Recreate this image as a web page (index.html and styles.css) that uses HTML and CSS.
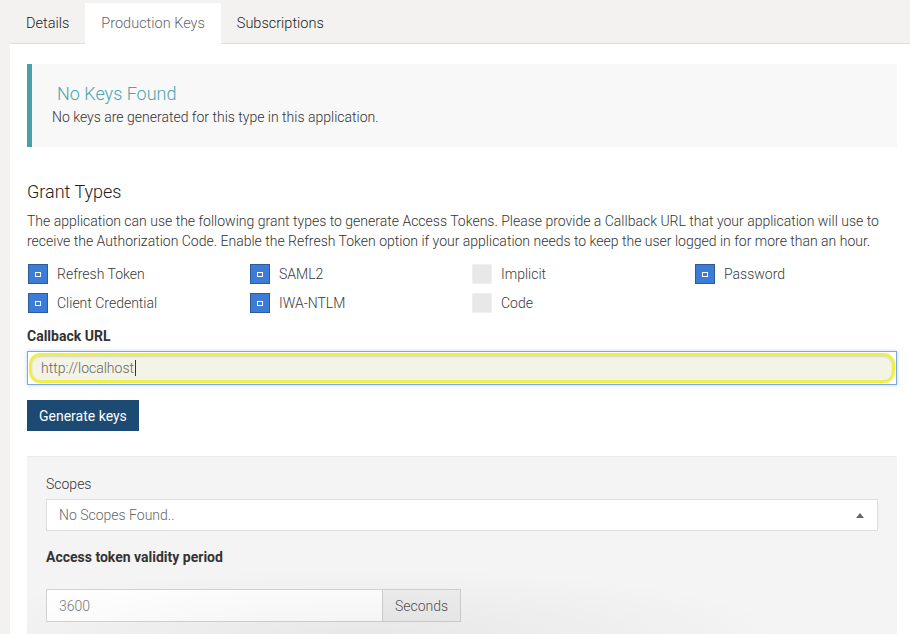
FILE: index.html
```html
<!DOCTYPE html>
<html>
<head>
<meta charset="utf-8">
<link rel="stylesheet" href="styles.css">
</head>
<body>
<div class="page">
  <div class="tabs">
    <div class="tab">Details</div>
    <div class="tab active">Production Keys</div>
    <div class="tab">Subscriptions</div>
  </div>
  <div class="content">
    <div class="alert">
      <div class="alert-title">No Keys Found</div>
      <div class="alert-text">No keys are generated for this type in this application.</div>
    </div>

    <h2 class="heading">Grant Types</h2>
    <p class="desc">The application can use the following grant types to generate Access Tokens. Please provide a Callback URL that your application will use to receive the Authorization Code. Enable the Refresh Token option if your application needs to keep the user logged in for more than an hour.</p>

    <div class="grants">
      <div class="grant"><span class="cb on"></span><span class="lbl">Refresh Token</span></div>
      <div class="grant"><span class="cb on"></span><span class="lbl">SAML2</span></div>
      <div class="grant"><span class="cb"></span><span class="lbl">Implicit</span></div>
      <div class="grant"><span class="cb on"></span><span class="lbl">Password</span></div>
      <div class="grant"><span class="cb on"></span><span class="lbl">Client Credential</span></div>
      <div class="grant"><span class="cb on"></span><span class="lbl">IWA-NTLM</span></div>
      <div class="grant"><span class="cb"></span><span class="lbl">Code</span></div>
    </div>

    <div class="field-label">Callback URL</div>
    <div class="url-outer">
      <div class="url-inner">http://localhost<span class="caret"></span></div>
    </div>

    <button class="btn">Generate keys</button>

    <div class="panel">
      <div class="panel-label">Scopes</div>
      <div class="select">
        <span>No Scopes Found..</span>
        <span class="tri"></span>
      </div>
      <div class="field-label panel-bold">Access token validity period</div>
      <div class="group">
        <div class="group-input">3600</div>
        <div class="group-addon">Seconds</div>
      </div>
    </div>
  </div>
</div>
</body>
</html>
```

FILE: styles.css
```css
html, body {
  margin: 0;
  padding: 0;
}
body {
  background: #f3f2f0;
  font-family: Roboto, "Liberation Sans", Arial, sans-serif;
  font-size: 14px;
  font-weight: 300;
  color: #333;
  height: 634px;
  overflow: hidden;
}
.page {
  margin-left: 10px;
}
.tabs {
  display: flex;
  height: 44px;
  padding-top: 3px;
  box-sizing: border-box;
  border-bottom: 1px solid #deddd8;
  background: #f3f2f0;
}
.tab {
  padding: 2px 16px 0 16px;
  height: 40px;
  box-sizing: border-box;
  line-height: 38px;
  font-size: 14.5px;
  color: #222;
}
.tab.active {
  background: #fff;
  color: #666;
  height: 41px;
  margin-bottom: -1px;
}
.content {
  background: #fff;
  padding: 20px 13px 0 17px;
  height: 590px;
  box-sizing: border-box;
  overflow: hidden;
}
.alert {
  background: #f8f8f8;
  border-left: 5px solid #4a9ea8;
  padding: 18px 20px 20px 20px;
}
.alert-title {
  font-size: 18px;
  line-height: 24px;
  color: #4ba4ae;
  margin-left: 5px;
  margin-bottom: 1px;
}
.alert-text {
  line-height: 20px;
  color: #333;
}
.heading {
  font-size: 18px;
  font-weight: 300;
  line-height: 24px;
  margin: 33px 0 0 0;
  color: #222;
}
.desc {
  margin: 7px 0 0 0;
  line-height: 20px;
  color: #333;
}
.grants {
  display: grid;
  grid-template-columns: 222px 222px 223px 1fr;
  row-gap: 9px;
  margin-top: 13px;
  padding-left: 1px;
}
.grant {
  display: flex;
  align-items: center;
  height: 20px;
}
.cb {
  width: 20px;
  height: 20px;
  box-sizing: border-box;
  background: #e8e8e8;
  border: 1px solid #efefef;
  display: flex;
  align-items: center;
  justify-content: center;
  flex: none;
}
.cb.on {
  background: #3c7bd6;
  border: 1px solid #2d5b98;
}
.cb.on::after {
  content: "";
  width: 4px;
  height: 3px;
  border: 1.5px solid #fff;
  background: #3c7bd6;
}
.lbl {
  margin-left: 9px;
  color: #3a3a3a;
  font-size: 14px;
}
.field-label {
  font-weight: 700;
  line-height: 20px;
  margin-top: 13px;
  color: #333;
}
.url-outer {
  margin-top: 5px;
  height: 34px;
  box-sizing: border-box;
  border: 1px solid #7aa8e6;
  box-shadow: 0 0 4px rgba(120, 160, 240, 0.45);
  padding: 1px;
}
.url-inner {
  height: 100%;
  box-sizing: border-box;
  border: 3px solid #eeee4c;
  border-radius: 11px;
  background: #f3f3e6;
  box-shadow: inset 0 1px 2px rgba(0,0,0,0.12);
  padding-left: 9px;
  display: flex;
  align-items: center;
  color: #666;
}
.caret {
  display: inline-block;
  width: 1px;
  height: 16px;
  background: #333;
  margin-left: 1px;
}
.btn {
  display: block;
  margin-top: 15px;
  height: 31px;
  padding: 0 12px;
  background: #1d4a73;
  color: #fff;
  border: none;
  font-family: inherit;
  font-size: 14px;
  font-weight: 400;
}
.panel {
  position: relative;
  margin-top: 25px;
  background: #f4f4f4;
  border-top: 1px solid #ebebeb;
  padding: 17px 19px 0 19px;
  height: 178px;
  box-sizing: border-box;
  overflow: hidden;
}
.panel::after {
  content: "";
  position: absolute;
  left: -20px;
  right: 100px;
  top: 110px;
  height: 68px;
  background: radial-gradient(ellipse at 45% 100%, rgba(0,0,0,0.05), rgba(0,0,0,0) 70%);
  pointer-events: none;
}
.panel-label {
  line-height: 20px;
  color: #333;
}
.select {
  margin-top: 5px;
  height: 32px;
  box-sizing: border-box;
  background: #fff;
  border: 1px solid #dedede;
  display: flex;
  align-items: center;
  justify-content: space-between;
  padding: 0 13px 0 12px;
  color: #666;
}
.tri {
  width: 0;
  height: 0;
  border-left: 4px solid transparent;
  border-right: 4px solid transparent;
  border-bottom: 5px solid #666;
}
.panel-bold {
  margin-top: 16px;
}
.group {
  display: flex;
  margin-top: 22px;
  height: 33px;
}
.group-input {
  width: 336px;
  box-sizing: border-box;
  background: #fff;
  border: 1px solid #d4d4d4;
  border-right: none;
  display: flex;
  align-items: center;
  padding-left: 12px;
  color: #777;
}
.group-addon {
  width: 79px;
  box-sizing: border-box;
  background: #eee;
  border: 1px solid #cfcfcf;
  display: flex;
  align-items: center;
  justify-content: center;
  color: #555;
}
```
